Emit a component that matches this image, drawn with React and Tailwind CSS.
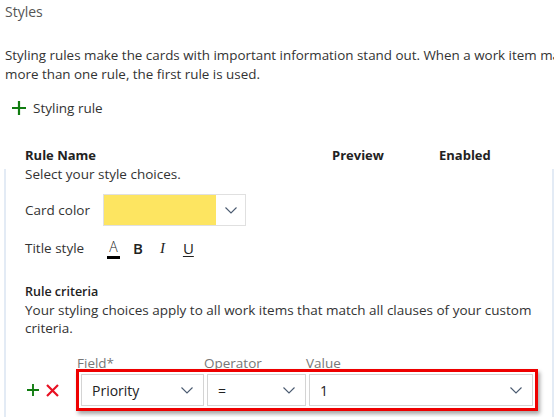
import React from "react";

const font = { fontFamily: '"Open Sans", "Noto Sans", "Liberation Sans", sans-serif' };

function Chevron({ className = "" }) {
  return (
    <svg width="12" height="7" viewBox="0 0 12 7" className={className}>
      <path d="M0.5 0.5 L6 6 L11.5 0.5" fill="none" stroke="#4a5a70" strokeWidth="1.1" />
    </svg>
  );
}

function Plus({ size = 14 }) {
  return (
    <svg width={size} height={size} viewBox="0 0 14 14">
      <path d="M7 0 V14 M0 7 H14" stroke="#107c10" strokeWidth="2.2" />
    </svg>
  );
}

function Cross() {
  return (
    <svg width="13" height="13" viewBox="0 0 13 13">
      <path d="M1 1 L12 12 M12 1 L1 12" stroke="#e81123" strokeWidth="2.2" />
    </svg>
  );
}

function Select({ value, className }) {
  return (
    <div className={`flex items-center justify-between h-[32px] border border-[#d4d4d4] bg-white pl-[10px] pr-[10px] text-[14px] text-[#222] ${className}`}>
      <span>{value}</span>
      <Chevron />
    </div>
  );
}

export default function App() {
  return (
    <div className="w-[554px] h-[417px] overflow-hidden bg-white text-[#333]" style={font}>
      <div className="pl-[5px] pt-[2px] text-[14px] text-[#555] leading-[20px]">Styles</div>

      <p className="pl-[5px] mt-[24px] text-[13.4px] leading-[19px] text-[#333] whitespace-nowrap">
        Styling rules make the cards with important information stand out. When a work item matches
        <br />
        more than one rule, the first rule is used.
      </p>

      <button className="flex items-center gap-[7px] ml-[12px] mt-[14px] text-[13.5px] text-[#333]">
        <Plus />
        <span>Styling rule</span>
      </button>

      <div className="flex mt-[28px] text-[13px] font-bold text-[#222] leading-[18px]">
        <div className="w-[332px] pl-[25px]">Rule Name</div>
        <div className="w-[107px]">Preview</div>
        <div>Enabled</div>
      </div>

      <div className="mt-[5px] ml-[4px] w-[550px] h-[260px] border-l-2 border-r-2 border-[#e3ebf5] overflow-hidden">
        <div className="pl-[19px] -mt-[4px] text-[13.5px] leading-[19px]">
          <div>Select your style choices.</div>

          <div className="flex items-center mt-[10px]">
            <span className="w-[78px]">Card color</span>
            <div className="flex h-[32px] w-[143px] border border-[#e0e0e0]">
              <div className="w-[112px] bg-[#fde561]" />
              <div className="flex-1 flex items-center justify-center">
                <Chevron />
              </div>
            </div>
          </div>

          <div className="flex items-center mt-[11px] h-[22px]">
            <span className="w-[82px]">Title style</span>
            <div className="flex items-center text-[15px] text-[#222]">
              <span className="w-[13px] text-center border-b-[3px] border-black leading-[18px] text-[14px] font-light">A</span>
              <span className="ml-[13px] font-semibold">B</span>
              <span className="ml-[17px] italic" style={{ fontFamily: '"Liberation Serif", serif' }}>I</span>
              <span className="ml-[18px] underline underline-offset-2">U</span>
            </div>
          </div>

          <div className="mt-[24px] text-[12.5px] font-semibold text-[#222] leading-[18px]">Rule criteria</div>
          <div className="leading-[18px]">
            Your styling choices apply to all work items that match all clauses of your custom
            <br />
            criteria.
          </div>

          <div className="flex mt-[20px] text-[13.5px] text-[#777] leading-[12px]">
            <span className="ml-[52px] w-[127px]">Field*</span>
            <span className="w-[102px]">Operator</span>
            <span>Value</span>
          </div>

          <div className="flex items-center">
            <div className="flex items-center gap-[7px] w-[51px] pl-[2px]">
              <Plus size={12} />
              <Cross />
            </div>
            <div className="flex gap-[3px] p-[2px] border-[3px] border-[#ee0000] shadow-[2px_3px_4px_rgba(0,0,0,0.35)]">
              <Select value="Priority" className="w-[123px]" />
              <Select value="=" className="w-[99px]" />
              <Select value="1" className="w-[224px]" />
            </div>
          </div>
        </div>
      </div>
    </div>
  );
}
